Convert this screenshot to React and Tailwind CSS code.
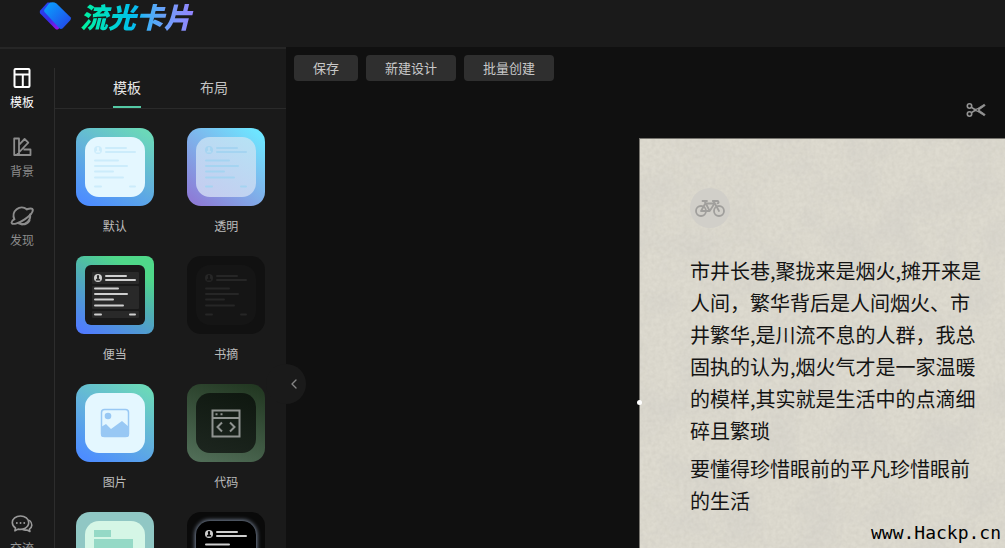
import React, { useState } from 'react';
import { ChevronLeft } from 'lucide-react';

const TemplateIcon = () => (
  <svg viewBox="0 0 20 22" className="w-5 h-[22px]" fill="none" stroke="currentColor" strokeWidth="2">
    <rect x="2.5" y="2" width="15" height="18" rx="1" />
    <path d="M2.5 7.5h15M10.8 7.5V20" />
  </svg>
);

const BackgroundIcon = () => (
  <svg viewBox="0 0 20 22" className="w-5 h-[22px]" fill="none" stroke="currentColor" strokeWidth="1.8" strokeLinejoin="round">
    <path d="M2.200 2.500h4.800v16.500H2.200zM7 8.800l5.600-5.800 3.700 3.700L4.500 19M11.500 13.500h7V19h-14" />
  </svg>
);

const DiscoverIcon = () => (
  <svg viewBox="0 0 24 22" className="w-6 h-[22px]" fill="none" stroke="currentColor" strokeWidth="2" strokeLinecap="round">
    <path d="M4.3 14.2A8.2 8.2 0 0 1 16.8 4.3M20 9.4A8.2 8.2 0 0 1 8.2 18.2" />
    <path d="M16.8 4.3C20 3.2 22.4 3.2 22.7 4.5c.5 2.2-3 6.4-8 9.8-5.600 3.800-11.700 5.700-12.900 3.800-.6-1 .6-2.600 2.500-3.900" />
    <path d="M11.500 19.300c3.600.3 6.500-1.200 8-3.900" />
  </svg>
);

const ChatIcon = () => (
  <svg viewBox="0 0 22 20" className="w-[22px] h-5" fill="none" stroke="currentColor" strokeWidth="1.600" strokeLinecap="round" strokeLinejoin="round">
    <path d="M9.500 2C4.800 2 1.300 4.800 1.300 8.600c0 2.300 1.200 4.200 3.200 5.400l-.6 2.800 3.200-1.700c4.800 1 10.600-1.300 10.600-6.500C17.700 4.800 14.200 2 9.500 2z" />
    <path d="M18.600 6.500c3.200 2.700 2.800 6.700-.2 8.600l.5 2.400-2.900-1.500c-1.500.3-3 .1-4.200-.4" />
    <path d="M5.800 9h.1M9.500 9h.1M13.200 9h.1" strokeWidth="1.800" />
  </svg>
);

const ScissorsIcon = () => (
  <svg viewBox="0 0 20 16" className="w-5 h-4" fill="none" stroke="currentColor" strokeWidth="1.600">
    <circle cx="3.500" cy="4" r="2.200" />
    <circle cx="3.500" cy="12" r="2.200" />
    <path d="M5.200 5.200l4.300 2.800-4.300 2.800" />
    <path d="M8 8.800L18.200 2.300l1 1.200L11.500 9zM8 7.200l10.200 6.500 1-1.200L11.500 7z" fill="currentColor" strokeWidth=".8" />
  </svg>
);

const BikeIcon = () => (
  <svg viewBox="0 0 30 20" className="w-[30px] h-5" fill="none" stroke="currentColor" strokeWidth="1.800" strokeLinecap="round" strokeLinejoin="round">
    <circle cx="6" cy="13" r="5" />
    <circle cx="24" cy="13" r="5" />
    <path d="M7.500 3h4.500M9.500 3l5.200 10H6l4.300-7.500h9.200L14.700 13M17.800 3h5.200q1.500 1.800-.5 2.300M18.500 3L24 13" />
  </svg>
);

const LogoIcon = () => (
  <svg viewBox="0 0 34 30" className="w-[34px] h-[30px]">
    <defs>
      <linearGradient id="logoBack" x1="0" y1="0" x2="1" y2="1">
        <stop offset="0" stopColor="#1d4cf0" />
        <stop offset=".5" stopColor="#3a2be8" />
        <stop offset="1" stopColor="#c800e8" />
      </linearGradient>
      <linearGradient id="logoFront" x1="0" y1="0" x2="1" y2="1">
        <stop offset="0" stopColor="#08a6ff" />
        <stop offset="1" stopColor="#2440e6" />
      </linearGradient>
    </defs>
    <path d="M9.500 2.500L2.200 10.500q-1 1.500 0 3L17.500 29q1.500 1 3 0L28 20 13 2.500z" fill="url(#logoBack)" />
    <path d="M11 3.500L6.500 9.500q-.8 1.500 0 2.500L21 28q1.500 1.500 3.500.5l8-8.500q1-1.500 0-2.800L18.500 3.500Q14.500 1.200 11 3.500z" fill="url(#logoFront)" />
  </svg>
);

// Small avatar + text lines shown inside a template thumbnail
const CardLines = ({ avatarFill }) => (
  <svg viewBox="0 0 60 60" className="size-full" fill="currentColor">
    <circle cx="13" cy="13" r="4" />
    <path d="M10.500 15.500q.5-2 1.800-2-1.200-3.500.7-3.500t.7 3.500q1.300 0 1.800 2z" fill={avatarFill} />
    <rect x="20" y="10" width="22" height="2" rx="1" />
    <rect x="20" y="14" width="31" height="2" rx="1" />
    <rect x="9" y="22.500" width="25" height="2" rx="1" />
    <rect x="9" y="28" width="34" height="2" rx="1" />
    <rect x="9" y="33.500" width="20" height="2" rx="1" />
    <rect x="9" y="39.500" width="30" height="2" rx="1" />
    <rect x="9" y="48.500" width="8" height="2" rx="1" />
    <rect x="44" y="48.500" width="7" height="2" rx="1" />
  </svg>
);

const BentoLines = () => (
  <svg viewBox="0 0 60 60" className="size-full">
    <g fill="#292929">
      <rect x="7" y="7" width="47" height="12" rx="1" />
      <rect x="7" y="21" width="47" height="23" rx="1" />
      <rect x="7" y="46" width="47" height="7" rx="1" />
    </g>
    <g fill="#cfcfcf">
      <circle cx="13" cy="13" r="4" />
      <rect x="20" y="10" width="22" height="2" rx="1" />
      <rect x="20" y="14" width="31" height="2" rx="1" />
      <rect x="9" y="22.500" width="25" height="2" rx="1" />
      <rect x="9" y="28" width="34" height="2" rx="1" />
      <rect x="9" y="33.500" width="20" height="2" rx="1" />
      <rect x="9" y="39.500" width="30" height="2" rx="1" />
      <rect x="9" y="48.500" width="8" height="2" rx="1" />
      <rect x="44" y="48.500" width="7" height="2" rx="1" />
    </g>
    <path d="M10.500 15.500q.5-2 1.800-2-1.200-3.500.7-3.500t.7 3.500q1.300 0 1.800 2z" fill="#292929" />
  </svg>
);

const ImageArt = () => (
  <svg viewBox="0 0 60 60" className="size-full">
    <rect x="16.500" y="16.500" width="27" height="27" rx="3" fill="none" stroke="#98c8f4" strokeWidth="1.500" />
    <circle cx="23" cy="23" r="3.300" fill="#98c8f4" />
    <path d="M16 34l5-3 5 5 11-8 7 6v8q0 2-2 2H18q-2 0-2-2z" fill="#98c8f4" />
  </svg>
);

const CodeArt = () => (
  <svg viewBox="0 0 60 60" className="size-full" fill="none" stroke="#8f9390" strokeWidth="2">
    <path d="M16.500 17.500h27v26h-27zM16.500 25h27" strokeWidth="2" />
    <path d="M19.500 21.300h2M24.500 21.300h2M26 29.500L21.500 34l4.500 4.500M34 29.500l4.500 4.500-4.500 4.500" />
  </svg>
);

const BlocksArt = () => (
  <svg viewBox="0 0 60 60" className="size-full" fill="#95d9c6">
    <rect x="9" y="9" width="17" height="7" />
    <rect x="9" y="18" width="39" height="34" />
  </svg>
);

const templates = [
  { name: '默认', outer: 'rounded-[14px] bg-linear-[30deg,#4d8dff_8%,#62b1dc_50%,#6bd8b9_92%]', inner: 'rounded-[14px] bg-[#e4f7ff] text-[#ccecfb]', art: <CardLines avatarFill="#e4f7ff" /> },
  { name: '透明', outer: 'rounded-[14px] bg-linear-[40deg,#8d7dd7_8%,#7fb1ea_50%,#6ee5ff_92%]', inner: 'rounded-[14px] bg-linear-[30deg,#c6cbef,#b5e3f5] text-[#a5d4f1]', art: <CardLines avatarFill="#badcf3" /> },
  { name: '便当', outer: 'rounded-lg bg-linear-[30deg,#507bff_5%,#50adb6_50%,#4fd889_80%]', inner: 'rounded-md bg-[#191919]', art: <BentoLines /> },
  { name: '书摘', outer: 'rounded-[14px] bg-[#111111]', inner: 'rounded-[14px] bg-[#151515] text-[#262626]', art: <CardLines avatarFill="#151515" /> },
  { name: '图片', outer: 'rounded-[14px] bg-linear-[30deg,#4d8dff_8%,#62b1dc_50%,#6bd8b9_92%]', inner: 'rounded-[14px] bg-[#e4f7ff]', art: <ImageArt /> },
  { name: '代码', outer: 'rounded-[14px] bg-linear-[20deg,#53705a,#20351f]', inner: 'rounded-[14px] bg-linear-[20deg,#1d261f,#0e170f]', art: <CodeArt /> },
  { name: '便签', outer: 'rounded-[14px] bg-[#90c7c4]', inner: 'rounded-[14px] bg-[#d5f6e6]', art: <BlocksArt /> },
  { name: '暗夜', outer: 'rounded-[14px] bg-[#0a0a0a]', inner: 'rounded-[14px] bg-black text-[#cfcfcf] shadow-[0_0_4px_1px_#7a879b]', art: <CardLines avatarFill="#000000" /> },
];

const navItems = [
  { name: '模板', icon: <TemplateIcon /> },
  { name: '背景', icon: <BackgroundIcon /> },
  { name: '发现', icon: <DiscoverIcon /> },
];

const PaperTexture = () => (
  <svg className="absolute inset-0 size-full" aria-hidden="true">
    <filter id="paperGrain" x="0" y="0" width="100%" height="100%">
      <feTurbulence type="fractalNoise" baseFrequency="0.25" numOctaves="3" seed="4" />
      <feColorMatrix values="0 0 0 0 0.45  0 0 0 0 0.43  0 0 0 0 0.38  0.32 0 0 0 -0.08" />
    </filter>
    <filter id="paperStain" x="0" y="0" width="100%" height="100%">
      <feTurbulence type="fractalNoise" baseFrequency="0.025" numOctaves="2" seed="9" />
      <feColorMatrix values="0 0 0 0 0.55  0 0 0 0 0.54  0 0 0 0 0.53  0.5 0 0 0 -0.2" />
    </filter>
    <rect width="100%" height="100%" filter="url(#paperGrain)" />
    <rect width="100%" height="100%" filter="url(#paperStain)" />
  </svg>
);

const Sidebar = () => {
  const [activeNav, setActiveNav] = useState('模板');
  const [activeTab, setActiveTab] = useState('模板');

  return (
    <aside className="relative flex w-[286px] shrink-0 border-t-2 border-[#262626] bg-[#1a1a1a]">
      <nav className="flex w-[54px] shrink-0 flex-col items-center pt-[18px] pr-[10px]">
        {navItems.map((item) => (
          <button
            key={item.name}
            onClick={() => setActiveNav(item.name)}
            className={`flex h-[69px] flex-col items-center gap-[3px] text-xs leading-5 ${activeNav === item.name ? 'text-white' : 'text-[#8c8c8c]'}`}
          >
            {item.icon}
            {item.name}
          </button>
        ))}
        <button className="mt-auto -mb-[10px] flex flex-col items-center gap-1 text-xs leading-5 text-[#9a9a9a]">
          <ChatIcon />
          交流
        </button>
      </nav>
      <div className="mt-[19px] flex-1 overflow-hidden border-l border-[#2d2d2d]">
        <div className="flex justify-center gap-[59px] border-b border-[#2a2a2a] text-sm">
          {['模板', '布局'].map((tab) => (
            <button
              key={tab}
              onClick={() => setActiveTab(tab)}
              className={`h-10 border-b-2 ${activeTab === tab ? 'border-[#54c9a5] text-[#e8e8e8]' : 'border-transparent text-[#c4c4c4]'}`}
            >
              {tab}
            </button>
          ))}
        </div>
        <div className="grid grid-cols-2 justify-items-center gap-y-[18px] px-1 pt-[19px]">
          {templates.map((item) => (
            <button key={item.name} className="flex flex-col items-center gap-2 text-xs leading-6 text-[#bdbdbd]">
              <span className={`flex size-[78px] items-center justify-center ${item.outer}`}>
                <span className={`size-[60px] overflow-hidden ${item.inner}`}>{item.art}</span>
              </span>
              {item.name}
            </button>
          ))}
        </div>
      </div>
      <button
        aria-label="收起"
        className="absolute top-[315px] -right-5 flex size-10 items-center justify-end rounded-full bg-[#1a1a1a] pr-1 text-[#858585]"
      >
        <ChevronLeft size={16} strokeWidth={2} />
      </button>
    </aside>
  );
};

const App = () => {
  return (
    <div className="flex h-screen flex-col overflow-hidden bg-[#1a1a1a] font-['Noto_Sans_CJK_SC',sans-serif]">
      <header className="flex h-[47px] shrink-0 items-start gap-2 pl-[38px]">
        <LogoIcon />
        <h1 className="bg-linear-to-r from-[#00f59b] via-[#12b5f5] to-[#9a7cff] bg-clip-text pr-2 text-[28px] leading-8 font-black text-transparent italic">
          流光卡片
        </h1>
      </header>
      <div className="flex min-h-0 flex-1">
        <Sidebar />
        <main className="flex min-w-0 flex-1 flex-col bg-[#101010]">
          <div className="flex gap-2 p-2 text-[13px] text-[#c9c9c9]">
            {['保存', '新建设计', '批量创建'].map((label) => (
              <button key={label} className="h-[26px] rounded-sm bg-[#2f2f2f] px-[19px]">
                {label}
              </button>
            ))}
          </div>
          <div className="flex justify-end pt-[13px] pr-[19px] text-[#949494]">
            <button aria-label="裁剪">
              <ScissorsIcon />
            </button>
          </div>
          <section className="relative mt-5 ml-[353px] flex-1 border-t border-l border-[#77756f] bg-[#dedbd0]">
            <PaperTexture />
            <span className="absolute top-[261px] -left-[3px] size-[5px] rounded-full bg-white" />
            <div className="relative pt-[49px] pl-[50px]">
              <div className="flex size-10 items-center justify-center rounded-full bg-[#d1cfc9] text-[#a09f9c]">
                <BikeIcon />
              </div>
              <div className="mt-[27px] w-[292px] space-y-[6px] text-xl leading-8 text-[#141414]">
                <p>
                  市井长巷,聚拢来是烟火,摊开来是人间，繁华背后是人间烟火、市井繁华,是川流不息的人群，我总固执的认为,烟火气才是一家温暖的模样,其实就是生活中的点滴细碎且繁琐
                </p>
                <p>要懂得珍惜眼前的平凡珍惜眼前的生活</p>
              </div>
            </div>
            <p className="absolute right-1 bottom-[3px] font-['DejaVu_Sans_Mono',monospace] text-lg leading-6 text-black">
              www.Hackp.cn
            </p>
          </section>
        </main>
      </div>
    </div>
  );
};

export default App;
